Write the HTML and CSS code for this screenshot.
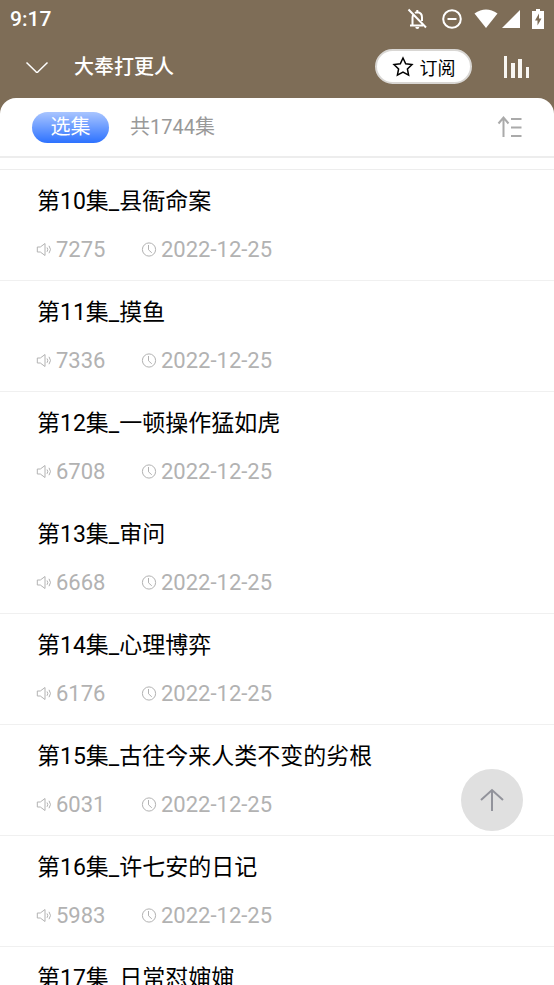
FILE: index.html
```html
<!DOCTYPE html>
<html lang="zh-CN">
<head>
<meta charset="utf-8">
<meta name="viewport" content="width=device-width, initial-scale=1">
<title>大奉打更人</title>
<link rel="stylesheet" href="styles.css">
</head>
<body>
<svg class="defs" aria-hidden="true">
  <symbol id="speaker" viewBox="0 0 16 16"><path d="M1.300 5h3L9 1.500v12L4.300 10h-3zM11 5.500q1.600 2 0 4.300M13 3.800q3 3.700 0 7.400"/></symbol>
  <symbol id="clock" viewBox="0 0 16 16"><circle cx="8" cy="7.500" r="6.600"/><path d="M7.500 3v4.800l3.300 3"/></symbol>
</svg>
<header class="top">
  <div class="status">
    <span class="time">9:17</span>
    <div class="status-icons">
      <svg class="bell" width="22" height="22" viewBox="0 0 22 22"><path d="M2.500 1.500l17.500 18M4 17.500H17M6.500 16.500V9.500q0-2 1-3.200M9 5q1-.700 2.300-.700 4.700.3 4.700 5.200v3.500M11.300 4V2"/><path class="solid" d="M9.300 19h4a2 2 0 0 1-4 0z"/></svg>
      <svg class="dnd" width="20" height="20" viewBox="0 0 20 20"><circle cx="10" cy="10" r="8.800"/><path d="M5.500 10h9"/></svg>
      <svg class="wifi" width="24" height="20" viewBox="0 0 24 20"><path class="solid" d="M.5 4.500Q12-3.500 23.500 4.500L12 19z"/></svg>
      <svg class="signal" width="18" height="18" viewBox="0 0 18 18"><path class="solid" d="M0 18L18 0v18z"/></svg>
      <svg class="battery" width="12" height="20" viewBox="0 0 12 20"><path class="solid" d="M4 0h4v2h4v18H0V2h4z"/><path class="bolt" d="M7 4.500L3 11.500H5.500v5L9.500 9.500H7z"/></svg>
    </div>
  </div>
  <nav class="nav">
    <button class="icon-button" type="button" aria-label="收起"><svg class="chevron" width="24" height="14" viewBox="0 0 24 14"><path d="M1.500 2.500l9.500 9.300q1 .8 2 0l9.500-9.300"/></svg></button>
    <h1 class="book">大奉打更人</h1>
    <button class="subscribe" type="button"><svg class="star" width="22" height="22" viewBox="0 0 22 22"><path d="M11 2l2.700 5.800 6.300.8-4.600 4.400 1.200 6.200L11 16.200l-5.600 3 1.200-6.200L2 8.600l6.300-.8z"/></svg>订阅</button>
    <button class="icon-button" type="button" aria-label="播放状态"><svg class="bars" width="25" height="22" viewBox="0 0 25 22"><path class="solid" d="M0 0h3v22H0zM7 7h4v15H7zM14 3h4v19h-4zM22 11h3v11h-3z"/></svg></button>
  </nav>
</header>
<main class="sheet">
  <div class="toolbar">
    <button class="pick" type="button">选集</button>
    <span class="total">共1744集</span>
    <button class="icon-button sort" type="button" aria-label="排序"><svg width="26" height="24" viewBox="0 0 26 24"><path d="M6.500 22V2.500M1.500 8.500l5-6 5 6M14 4h10.500M14 12.500h10.500M14 21h10.500"/></svg></button>
  </div>
  <ul class="episodes">
    <li><h2>第10集_县衙命案</h2><p><svg><use href="#speaker"/></svg><span class="plays">7275</span><svg><use href="#clock"/></svg><time>2022-12-25</time></p></li>
    <li><h2>第11集_摸鱼</h2><p><svg><use href="#speaker"/></svg><span class="plays">7336</span><svg><use href="#clock"/></svg><time>2022-12-25</time></p></li>
    <li class="no-line"><h2>第12集_一顿操作猛如虎</h2><p><svg><use href="#speaker"/></svg><span class="plays">6708</span><svg><use href="#clock"/></svg><time>2022-12-25</time></p></li>
    <li><h2>第13集_审问</h2><p><svg><use href="#speaker"/></svg><span class="plays">6668</span><svg><use href="#clock"/></svg><time>2022-12-25</time></p></li>
    <li><h2>第14集_心理博弈</h2><p><svg><use href="#speaker"/></svg><span class="plays">6176</span><svg><use href="#clock"/></svg><time>2022-12-25</time></p></li>
    <li><h2>第15集_古往今来人类不变的劣根</h2><p><svg><use href="#speaker"/></svg><span class="plays">6031</span><svg><use href="#clock"/></svg><time>2022-12-25</time></p></li>
    <li><h2>第16集_许七安的日记</h2><p><svg><use href="#speaker"/></svg><span class="plays">5983</span><svg><use href="#clock"/></svg><time>2022-12-25</time></p></li>
    <li><h2>第17集_日常怼婶婶</h2></li>
  </ul>
</main>
<button class="to-top" type="button" aria-label="回到顶部"><svg width="26" height="26" viewBox="0 0 26 26"><path d="M13 24V3M2 13L13 3l11 10"/></svg></button>
</body>
</html>
```
FILE: styles.css
```css
* { box-sizing: border-box; }
body {
  margin: 0;
  height: 100vh;
  display: flex;
  flex-direction: column;
  overflow: hidden;
  background: #7e6d57;
  color: #000;
  font-family: Roboto, "Noto Sans CJK SC", sans-serif;
}
h1, h2, p, ul { margin: 0; padding: 0; }
button { font: inherit; border: 0; padding: 0; cursor: pointer; }
svg { display: block; flex: none; fill: none; stroke: currentColor; stroke-width: 2; }
.solid { fill: currentColor; stroke: none; }
.defs { position: absolute; width: 0; height: 0; }
.top { color: #fff; flex: none; }
.status {
  display: flex;
  align-items: center;
  justify-content: space-between;
  height: 38px;
  padding: 0 10px;
}
.time { font-size: 21px; font-weight: 500; }
.status-icons { display: flex; align-items: center; }
.dnd { margin-left: 14px; }
.wifi { margin-left: 12px; }
.signal { margin-left: 4px; }
.battery { margin-left: 12px; }
.bolt { fill: #7e6d57; stroke: none; }
.nav {
  display: flex;
  align-items: center;
  height: 60px;
  padding: 0 25px 3px;
}
.icon-button { background: none; color: inherit; }
.chevron { stroke-width: 1.5; }
.book { flex: 1; margin-left: 25px; font-size: 20px; line-height: 30px; font-weight: 500; }
.subscribe {
  display: flex;
  align-items: center;
  justify-content: center;
  gap: 6px;
  width: 97px;
  height: 35px;
  margin-right: 32px;
  border: 2px solid #d9d7d4;
  border-radius: 18px;
  background: #fff;
  color: #000;
  font-size: 18px;
}
.star { stroke-width: 1.5; }
.bars { color: #f8f6f2; }
.sheet {
  flex: 1;
  min-height: 0;
  display: flex;
  flex-direction: column;
  background: #fff;
  border-radius: 16px 16px 0 0;
}
.toolbar {
  flex: none;
  display: flex;
  align-items: center;
  height: 60px;
  padding: 0 31px 0 32px;
  border-bottom: 2px solid #ededed;
}
.pick {
  width: 77px;
  height: 31px;
  border-radius: 16px;
  background: linear-gradient(#a9c5ff, #2d72ff);
  color: #fff;
  font-size: 20px;
  line-height: 31px;
}
.total { flex: 1; margin-left: 21px; color: #999; font-size: 20px; line-height: 30px; }
.sort { color: #aaa; }
.episodes {
  flex: 1;
  min-height: 0;
  padding-top: 11px;
  overflow-y: auto;
  scrollbar-width: none;
  list-style: none;
}
.episodes::before { content: ""; display: block; height: 1px; background: #ededed; }
.episodes li { padding: 16px 37px 14px; border-bottom: 1px solid #f0f0f0; }
.episodes .no-line { border-color: transparent; }
.episodes h2 { font-size: 23px; line-height: 32px; font-weight: 400; }
.episodes p {
  display: flex;
  align-items: center;
  margin: 16px 0 0 -1px;
  color: #b2b2b2;
  font-size: 22px;
  line-height: 32px;
}
.episodes svg { width: 16px; height: 16px; margin-right: 4px; stroke-width: 1; }
.plays { min-width: 85px; }
.to-top {
  position: fixed;
  right: 31px;
  bottom: 154px;
  display: grid;
  place-items: center;
  width: 62px;
  height: 62px;
  border-radius: 50%;
  background: #e0e0e0;
  color: #92939b;
}
```
